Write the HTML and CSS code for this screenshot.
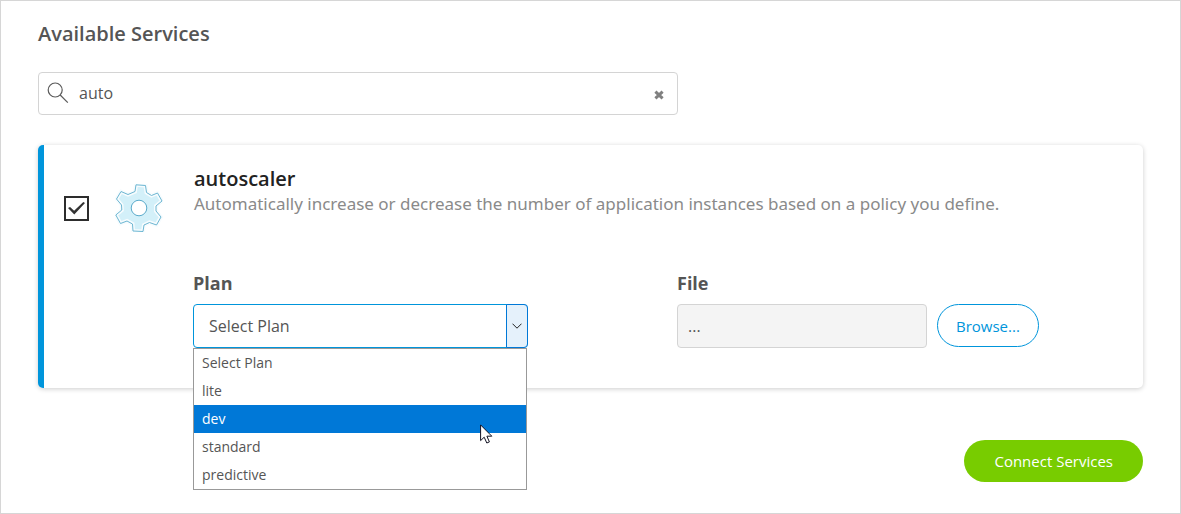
FILE: index.html
```html
<!DOCTYPE html>
<html lang="en">
<head>
<meta charset="utf-8">
<meta name="viewport" content="width=device-width, initial-scale=1">
<title>Available Services</title>
<link rel="stylesheet" href="styles.css">
</head>
<body>
<main class="page">
  <h1 class="page-title">Available Services</h1>

  <div class="search">
    <svg class="search-icon" viewBox="0 0 22 22" aria-hidden="true"><circle cx="8.2" cy="8" r="7"/><path d="M13.2 13l7.6 7.6"/></svg>
    <input class="search-input" type="text" value="auto" aria-label="Search services">
    <button class="search-clear" type="button" aria-label="Clear search">
      <svg viewBox="0 0 10 10" aria-hidden="true"><path d="M1.4 1.6l7.2 6.8M8.6 1.6L1.4 8.4"/></svg>
    </button>
  </div>

  <section class="card">
    <input class="card-check" type="checkbox" checked aria-label="Select autoscaler">
    <svg class="gear" viewBox="0 0 48 48" aria-hidden="true">
      <path class="gear-fill" d="M21 .8L30.500 1.500L31.500 8.500L36.500 11.500L42.500 9L47 17L41 22L41 27L46 33L41.500 41L34.500 38.500L29 41L28 47.500L18 47L17.500 40L12 37L5.500 39.500L.8 31L6.800 26L6.500 21L1.500 15L6 7.500L13 10.500L20 7.500Z"/>
      <path class="gear-gap" d="M21 .8L30.500 1.500L31.500 8.500L36.500 11.500L42.500 9L47 17L41 22L41 27L46 33L41.500 41L34.500 38.500L29 41L28 47.500L18 47L17.500 40L12 37L5.500 39.500L.8 31L6.800 26L6.500 21L1.500 15L6 7.500L13 10.500L20 7.500Z"/>
      <path class="gear-line" d="M21 .8L30.500 1.500L31.500 8.500L36.500 11.500L42.500 9L47 17L41 22L41 27L46 33L41.500 41L34.500 38.500L29 41L28 47.500L18 47L17.500 40L12 37L5.500 39.500L.8 31L6.800 26L6.500 21L1.500 15L6 7.500L13 10.500L20 7.500Z"/>
      <circle class="gear-hole" cx="24" cy="24" r="7.800"/>
    </svg>
    <div class="card-text">
      <h2 class="service-name">autoscaler</h2>
      <p class="service-desc">Automatically increase or decrease the number of application instances based on a policy you define.</p>
    </div>
    <div class="fields">
      <div class="field">
        <label class="field-label" for="plan">Plan</label>
        <div class="plan">
          <select class="plan-select" id="plan">
            <option>Select Plan</option>
            <option>lite</option>
            <option>dev</option>
            <option>standard</option>
            <option>predictive</option>
          </select>
          <span class="plan-arrow"><svg viewBox="0 0 10 6" aria-hidden="true"><path d="M.5.7L5 5.200L9.500.7"/></svg></span>
          <ul class="menu" role="listbox" aria-label="Plan">
            <li class="menu-item" role="option">Select Plan</li>
            <li class="menu-item" role="option">lite</li>
            <li class="menu-item menu-item-active" role="option" aria-selected="true">dev
              <svg class="pointer" viewBox="0 0 13 20" aria-hidden="true"><path d="M.6.900V16.600L4.200 13.200L6.800 19L9.400 17.900L6.900 12.200H11.800Z"/></svg>
            </li>
            <li class="menu-item" role="option">standard</li>
            <li class="menu-item" role="option">predictive</li>
          </ul>
        </div>
      </div>
      <div class="field">
        <label class="field-label" for="file">File</label>
        <div class="file">
          <input class="file-name" id="file" type="text" value="..." readonly>
          <button class="button button-outline" type="button">Browse...</button>
        </div>
      </div>
    </div>
  </section>

  <div class="actions">
    <button class="button button-primary" type="button">Connect Services</button>
  </div>
</main>
</body>
</html>
```

FILE: styles.css
```css
* {
  box-sizing: border-box;
}

body {
  margin: 0;
  background: #fff;
  color: #555;
  font: 16px/24px "Open Sans", "Noto Sans", sans-serif;
}

h1, h2, p, ul {
  margin: 0;
  padding: 0;
}

input, select, button {
  font: inherit;
  color: inherit;
}

.page {
  min-height: 100vh;
  padding: 19px 37px 31px;
  border: 1px solid #d6d6d6;
}

.page-title {
  font-size: 20px;
  line-height: 28px;
  font-weight: 600;
}

.search {
  display: flex;
  align-items: center;
  gap: 10px;
  max-width: 640px;
  height: 43px;
  margin-top: 24px;
  padding: 0 13px 2px 8px;
  border: 1px solid #d4d4d4;
  border-radius: 4px;
}

.search-icon {
  flex: none;
  width: 22px;
  height: 22px;
  fill: none;
  stroke: #5a5a5a;
  stroke-width: 1.2;
}

.search-input {
  flex: 1;
  min-width: 0;
  padding: 0;
  border: 0;
  outline: 0;
  background: none;
}

.search-clear {
  display: flex;
  padding: 5px 0 0;
  border: 0;
  background: none;
}

.search-clear svg {
  width: 10px;
  height: 10px;
  stroke: #808080;
  stroke-width: 3;
}

.card {
  display: grid;
  grid-template-columns: 25px 48px 1fr;
  column-gap: 26px;
  align-items: center;
  margin-top: 30px;
  padding: 20px 20px 40px;
  border-left: 6px solid #0095db;
  border-radius: 5px;
  box-shadow: 0 1px 5px rgba(0, 0, 0, .2);
}

.card-check {
  appearance: none;
  width: 25px;
  height: 25px;
  margin: 0;
  border: 2px solid #2d2d2d;
  display: grid;
  place-items: center;
}

.card-check:checked::before {
  content: "";
  width: 17px;
  height: 13px;
  background: #333;
  clip-path: polygon(0 50%, 12% 42%, 36% 72%, 90% 3%, 100% 12%, 37% 100%);
}

.gear {
  width: 48px;
  height: 48px;
}

.gear-fill {
  fill: #d3f0f9;
}

.gear-gap {
  fill: none;
  stroke: #f7fcfe;
  stroke-width: 4;
}

.gear-line {
  fill: none;
  stroke: #6cb6d2;
}

.gear-hole {
  fill: #fff;
  stroke: #5aabcb;
}

.card-text {
  padding: 2px 0 34px 5px;
}

.service-name {
  color: #222;
  font-size: 20px;
  line-height: 24px;
  font-weight: 600;
}

.service-desc {
  color: #8a8a8a;
  font-family: "Noto Sans", "Open Sans", sans-serif;
  font-size: 17px;
  line-height: 26px;
}

.fields {
  grid-column: 3;
  display: grid;
  grid-template-columns: minmax(0, 480px) minmax(0, 1fr);
  gap: 4px;
  padding: 20px 0 0 4px;
}

.field-label {
  display: block;
  margin-bottom: 9px;
  font-size: 18px;
  line-height: 24px;
  font-weight: 700;
}

.plan {
  position: relative;
  max-width: 335px;
}

.plan-select {
  appearance: none;
  display: block;
  width: 100%;
  height: 44px;
  padding: 0 30px 0 15px;
  border: 1px solid #0095db;
  border-radius: 4px;
  background: #fff;
}

.plan-arrow {
  position: absolute;
  top: 0;
  right: 0;
  bottom: 0;
  display: grid;
  place-items: center;
  width: 22px;
  border: 1px solid #0078d7;
  border-radius: 0 4px 4px 0;
  background: #e5f1fb;
  pointer-events: none;
}

.plan-arrow svg {
  width: 10px;
  height: 6px;
  fill: none;
  stroke: #222;
}

.menu {
  position: absolute;
  top: 44px;
  left: 0;
  right: 1px;
  border: 1px solid #999;
  background: #fff;
  list-style: none;
  font-size: 14px;
  line-height: 28px;
}

.menu-item {
  position: relative;
  padding: 0 8px;
}

.menu-item-active {
  background: #0078d7;
  color: #fff;
}

.pointer {
  position: absolute;
  top: 19px;
  right: 33px;
  z-index: 1;
  width: 13px;
  height: 20px;
  fill: #fff;
  stroke: #112;
}

.file {
  display: flex;
  align-items: flex-start;
  gap: 10px;
}

.file-name {
  flex: 0 1 250px;
  min-width: 0;
  height: 44px;
  padding: 0 10px;
  border: 1px solid #d4d4d4;
  border-radius: 4px;
  background: #f4f4f4;
}

.button {
  border-radius: 22px;
  font-size: 15px;
  white-space: nowrap;
}

.button-outline {
  height: 43px;
  padding: 0 18px;
  border: 1px solid #0095db;
  background: #fff;
  color: #0095db;
}

.actions {
  display: flex;
  justify-content: flex-end;
  margin-top: 52px;
}

.button-primary {
  height: 42px;
  padding: 0 30px;
  border: 0;
  background: #78cc00;
  color: #fff;
}
```
